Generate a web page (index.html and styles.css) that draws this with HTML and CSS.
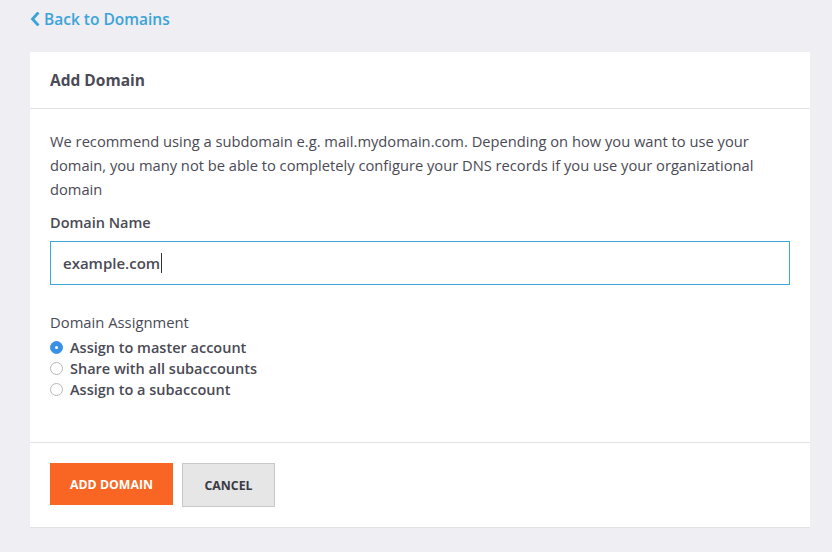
FILE: index.html
```html
<!DOCTYPE html>
<html>
<head>
<meta charset="utf-8">
<link rel="stylesheet" href="styles.css">
</head>
<body>
<div class="page">
  <a class="back" href="#"><svg class="chev" width="10" height="14" viewBox="0 0 10 14"><path d="M7.5 1.5 L2.5 7 L7.5 12.5" fill="none" stroke="currentColor" stroke-width="2.8" stroke-linecap="square"/></svg>Back to Domains</a>
  <div class="card">
    <div class="card-head">Add Domain</div>
    <div class="card-body">
      <p class="intro">We recommend using a subdomain e.g. mail.mydomain.com. Depending on how you want to use your domain, you many not be able to completely configure your DNS records if you use your organizational domain</p>
      <div class="label">Domain Name</div>
      <div class="input"><span>example.com</span><span class="caret"></span></div>
      <div class="label assign">Domain Assignment</div>
      <ul class="radios">
        <li><span class="radio on"></span>Assign to master account</li>
        <li><span class="radio"></span>Share with all subaccounts</li>
        <li><span class="radio"></span>Assign to a subaccount</li>
      </ul>
    </div>
    <div class="card-foot">
      <button class="btn primary">ADD DOMAIN</button>
      <button class="btn secondary">CANCEL</button>
    </div>
  </div>
</div>
</body>
</html>
```
FILE: styles.css
```css
html, body { margin: 0; padding: 0; }
body {
  background: #eeeef3;
  font-family: "Open Sans", Lato, sans-serif;
  color: #4a4a55;
  width: 832px;
  height: 552px;
  overflow: hidden;
}
.page { padding: 8px 22px 0 30px; }
.back {
  display: flex;
  align-items: center;
  gap: 4px;
  color: #3ba3d9;
  text-decoration: none;
  font-size: 15.5px;
  font-weight: 600;
  height: 22px;
}
.chev { display: block; }
.card {
  margin-top: 22px;
  background: #fff;
  border-bottom: 1px solid #e2e2e6;
}
.card-head {
  height: 56px;
  display: flex;
  align-items: center;
  padding: 0 20px;
  font-weight: 700;
  font-size: 15.5px;
  color: #4b4b56;
  border-bottom: 1px solid #e3e3e6;
}
.card-body { padding: 20px 20px 42px; }
.intro {
  margin: 0;
  font-size: 14.7px;
  line-height: 24px;
}
.label {
  font-size: 14.5px;
  font-weight: 600;
  margin-top: 10px;
  line-height: 24px;
}
.input {
  margin-top: 6px;
  height: 44px;
  box-sizing: border-box;
  border: 1px solid #3ea7d8;
  display: flex;
  align-items: center;
  padding: 0 12px;
  font-size: 15px;
  font-weight: 600;
  color: #4a4a55;
}
.caret { width: 1px; height: 20px; background: #333; margin-left: 1px; }
.label.assign { margin-top: 25px; font-weight: 500; font-size: 14.8px; }
.radios { list-style: none; margin: 3px 0 0; padding: 0; }
.radios li {
  display: flex;
  align-items: center;
  height: 21px;
  font-size: 14.5px;
  font-weight: 600;
}
.radio {
  width: 11px; height: 11px;
  border: 1px solid #b8b8b8;
  border-radius: 50%;
  margin-right: 7px;
  box-sizing: content-box;
  position: relative;
  background: #fff;
}
.radio.on { background: #3a8fe6; border-color: #3a8fe6; }
.radio.on::after {
  content: ""; position: absolute; left: 4px; top: 4px;
  width: 3px; height: 3px; border-radius: 50%; background: #fff;
}
.card-foot {
  border-top: 1px solid #e3e3e6;
  padding: 20px 20px 20px;
  display: flex;
  align-items: flex-start;
  gap: 9px;
}
.btn {
  font-family: inherit;
  font-size: 12.3px;
  font-weight: 700;
  cursor: pointer;
  padding: 0;
}
.primary {
  background: #f96522;
  color: #fff;
  border: none;
  width: 123px;
  height: 42px;
}
.secondary {
  background: #e6e6e6;
  color: #3a3a44;
  border: 1px solid #c8c8c8;
  width: 93px;
  height: 44px;
}
```
